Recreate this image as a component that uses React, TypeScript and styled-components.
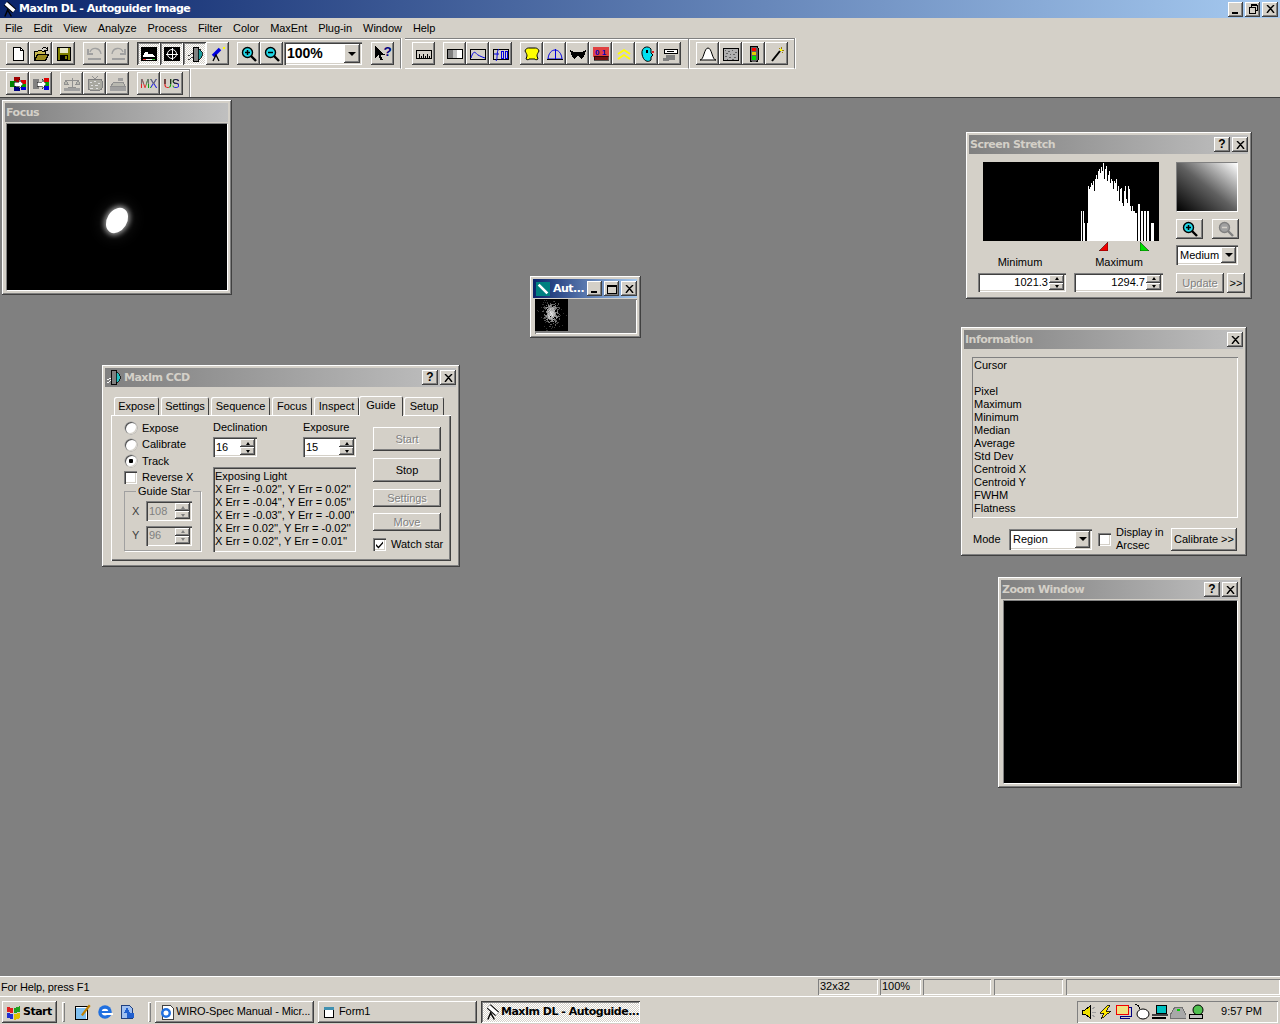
import React from "react"
import styled, { createGlobalStyle, css } from "styled-components"

const GlobalStyle = createGlobalStyle`
    html, body {
        margin: 0;
        padding: 0;
        background: #808080;
    }
    * {
        box-sizing: border-box;
    }
`

const FACE = "#d4d0c8"
const UI_FONT = `"Liberation Sans", Arial, sans-serif`
const TITLE_FONT = `"DejaVu Sans", Verdana, sans-serif`

const raised = css`
    box-shadow: inset -1px -1px #404040, inset 1px 1px #fff, inset -2px -2px #808080, inset 2px 2px ${FACE};
`
const sunken = css`
    box-shadow: inset 1px 1px #808080, inset 2px 2px #404040, inset -1px -1px #fff, inset -2px -2px ${FACE};
`
const etched = css`
    box-shadow: inset 1px 1px #808080, inset -1px -1px #fff;
`
const dither = css`
    background-color: #fff;
    background-image: conic-gradient(${FACE} 25%, #fff 0 50%, ${FACE} 0 75%, #fff 0);
    background-size: 2px 2px;
`

/* ---------- icons ---------- */

const Svg = styled.svg`
    display: block;
    flex: none;
    shape-rendering: crispEdges;
`

const Ico = ({ size = 16, children }: { size?: number; children: React.ReactNode }) => (
    <Svg width={size} height={size} viewBox="0 0 16 16">
        {children}
    </Svg>
)

const Lens = ({ plus, grey }: { plus?: boolean; grey?: boolean }) => (
    <g shapeRendering="auto">
        <path d="M10 10l5 5" stroke={grey ? "#808080" : "#000"} strokeWidth="2.4" />
        <circle cx="6.5" cy="6.5" r="5" fill={grey ? "#a0a0a0" : "#20d8e8"} stroke={grey ? "#808080" : "#000"} strokeWidth="1.4" />
        <path d="M4 6.5h5" stroke={grey ? "#d4d0c8" : "#000"} strokeWidth="1.5" />
        {plus && <path d="M6.5 4v5" stroke={grey ? "#d4d0c8" : "#000"} strokeWidth="1.5" />}
    </g>
)

const toolIcons: Record<string, React.ReactNode> = {
    new: (
        <Ico>
            <path d="M3.5 1.5h7l3 3v10h-10z" fill="#fff" stroke="#000" />
            <path d="M10.5 1.5v3h3" fill="none" stroke="#000" />
        </Ico>
    ),
    open: (
        <Ico>
            <path d="M1.5 5.5h3l1-1h3l1 1h3v9h-11z" fill="#c8b850" stroke="#000" />
            <path d="M1.5 14.5l3-6h11l-3 6z" fill="#9a8a20" stroke="#000" />
            <path d="M9 3c1-2 4-2 5 0M14 1v3h-3" fill="none" stroke="#000" />
        </Ico>
    ),
    save: (
        <Ico>
            <rect x="1.5" y="1.5" width="13" height="13" fill="#808000" stroke="#000" />
            <rect x="4" y="2" width="8" height="5" fill="#e8e8c8" />
            <rect x="4" y="9" width="8" height="5" fill="#000" />
            <rect x="9" y="10" width="2" height="3" fill="#808000" />
        </Ico>
    ),
    undo: (
        <Ico>
            <path d="M3 6c2-5 10-5 11 2" fill="none" stroke="#a0a0a0" strokeWidth="1.3" shapeRendering="auto" />
            <path d="M1 3v5h5" fill="none" stroke="#a0a0a0" strokeWidth="1.3" />
            <path d="M1 13h13" stroke="#a0a0a0" strokeWidth="2" />
        </Ico>
    ),
    redo: (
        <Ico>
            <path d="M13 6C11 1 3 1 2 8" fill="none" stroke="#a0a0a0" strokeWidth="1.3" shapeRendering="auto" />
            <path d="M15 3v5h-5" fill="none" stroke="#a0a0a0" strokeWidth="1.3" />
            <path d="M2 13h13" stroke="#a0a0a0" strokeWidth="2" />
        </Ico>
    ),
    image: (
        <Ico>
            <rect y="1" width="16" height="14" fill="#000" />
            <path d="M2 11c1-6 4-6 5-4s3 0 4 1 3 2 4 3z" fill="#fff" />
            <path d="M2 13h3" stroke="#ff3030" />
            <path d="M11 13h3" stroke="#30d030" />
            <path d="M5 13h6" stroke="#fff" />
        </Ico>
    ),
    target: (
        <Ico>
            <rect y="1" width="16" height="14" fill="#000" />
            <circle cx="8" cy="8" r="4.5" fill="none" stroke="#fff" shapeRendering="auto" />
            <path d="M8 2v12M2 8h12" stroke="#fff" />
        </Ico>
    ),
    ccd: (
        <Ico>
            <path d="M1 10l5-3M1 14l5-3" stroke="#404040" />
            <rect x="6" y="1" width="5" height="14" fill="#808080" stroke="#000" />
            <path d="M11 3h2l2 3v4l-2 3h-2z" fill="#20a0a0" stroke="#000" strokeWidth="0.8" />
        </Ico>
    ),
    scope: (
        <Ico>
            <path d="M3 10l7-7" stroke="#0000e0" strokeWidth="3.6" shapeRendering="auto" />
            <path d="M3 15l3-6 3 6" fill="none" stroke="#000" strokeWidth="1.3" shapeRendering="auto" />
            <rect x="13" y="1" width="2" height="2" fill="#ffff00" />
        </Ico>
    ),
    zoomIn: (
        <Ico>
            <Lens plus />
        </Ico>
    ),
    zoomOut: (
        <Ico>
            <Lens />
        </Ico>
    ),
    help: (
        <Ico size={18}>
            <path d="M1 1v11l3-3 2 5 2-1-2-4h4z" fill="#000" />
            <text x="8.5" y="10" fontFamily={UI_FONT} fontWeight="700" fontSize="12" fill="#000080">
                ?
            </text>
        </Ico>
    ),
    ruler: (
        <Ico>
            <rect x="0.5" y="4.5" width="15" height="8" fill={FACE} stroke="#000" />
            <path d="M3 8v4M5 10v2M7 8v4M9 10v2M11 8v4M13 10v2" stroke="#000" />
        </Ico>
    ),
    stretch: (
        <Ico>
            <rect x="0.5" y="3.5" width="15" height="9" fill="#fff" stroke="#000" />
            <rect x="1" y="4" width="5" height="8" fill="#808080" />
            <rect x="6" y="4" width="4" height="8" fill="#c0c0c0" />
        </Ico>
    ),
    curve: (
        <Ico>
            <rect x="0.5" y="3.5" width="15" height="10" fill="#d4d0c8" stroke="#000" />
            <path d="M1 12c3-10 5-4 7-3s4 2 7 3" fill="none" stroke="#0000e0" shapeRendering="auto" />
        </Ico>
    ),
    fft: (
        <Ico>
            <rect x="0.5" y="3.5" width="15" height="10" fill="#d4d0c8" stroke="#000" />
            <path d="M3 15c2-2 0-10 3-12M1 8h5" fill="none" stroke="#0000e0" shapeRendering="auto" />
            <path d="M8 5h2v7H8zM12 5h2v7h-2z" fill="none" stroke="#0000e0" />
        </Ico>
    ),
    hat: (
        <Ico>
            <path d="M1 5c1-3 3-3 4-3h6c1 0 3 0 4 3-1 2-2 3-2 5l1 3c-1 1-3 1-3 0H5c0 1-2 1-3 0l1-3c0-2-1-3-2-5z" fill="#ffff00" stroke="#000" shapeRendering="auto" />
        </Ico>
    ),
    dome: (
        <Ico>
            <path d="M1 13c1-12 13-12 14 0z" fill="none" stroke="#0000e0" shapeRendering="auto" />
            <path d="M8 3v10" stroke="#0000e0" />
            <path d="M0 13h16" stroke="#000" />
        </Ico>
    ),
    mask: (
        <Ico>
            <path d="M0 4l4 2h8l4-2-2 7-3 2-2-3H7l-2 3-3-2z" fill="#000" />
        </Ico>
    ),
    bits: (
        <Ico>
            <rect y="1" width="16" height="10" fill="#e04040" />
            <rect x="1" y="10" width="14" height="4" fill="#701010" stroke="#000" strokeWidth="0.6" />
            <text x="2" y="9" fontFamily={UI_FONT} fontSize="8" fontWeight="700" fill="#0000c0">
                0 1
            </text>
        </Ico>
    ),
    chevrons: (
        <Ico>
            <path d="M2 8l6-4 6 4M2 13l6-4 6 4" fill="none" stroke="#ffff00" strokeWidth="1.8" shapeRendering="auto" />
        </Ico>
    ),
    face: (
        <Ico>
            <path d="M12 3C9-1 2 1 3 8s6 9 9 6v-3l2-2-2-2z" fill="#00e0f0" stroke="#000" shapeRendering="auto" />
            <rect x="13" y="5" width="2" height="2" fill="#e02020" />
            <rect x="7" y="4" width="2" height="3" fill="#000" />
        </Ico>
    ),
    scale: (
        <Ico>
            <rect x="2" y="3.5" width="13" height="4" fill="#fff" stroke="#000" />
            <rect x="5" y="5" width="7" height="1" fill="#000" />
            <rect x="4" y="9" width="9" height="5" fill="#808080" />
            <rect x="1" y="12" width="6" height="3" fill="#808080" />
        </Ico>
    ),
    gauss: (
        <Ico>
            <path d="M0 14c4 0 4-12 8-12s4 12 8 12z" fill="#fff" stroke="#000" shapeRendering="auto" />
        </Ico>
    ),
    noise: (
        <Ico>
            <rect x="0.5" y="2.5" width="15" height="12" fill="#b0b0b0" stroke="#000" />
            <path d="M2 4h1M5 5h2M9 4h1M12 6h2M3 7h2M7 8h1M10 8h2M2 10h2M6 11h2M11 11h2M4 13h1M9 13h2" stroke="#606060" />
        </Ico>
    ),
    light: (
        <Ico>
            <rect x="4" y="0" width="8" height="16" rx="2" fill="#606060" stroke="#000" />
            <rect x="6" y="2" width="4" height="3" fill="#ff0000" />
            <rect x="6" y="6" width="4" height="3" fill="#e0d000" />
            <rect x="6" y="10" width="4" height="4" fill="#00e000" />
        </Ico>
    ),
    wand: (
        <Ico>
            <path d="M3 15l8-10" stroke="#000" strokeWidth="2" shapeRendering="auto" />
            <path d="M12 1v2M15 4h-2M10 2l1 1M14 7l-1-1" stroke="#a08000" />
            <rect x="11" y="3" width="2" height="2" fill="#ffff00" />
        </Ico>
    ),
    rgbIn: (
        <Ico>
            <rect x="4" y="1" width="6" height="5" fill="#a00000" />
            <rect x="0" y="5" width="6" height="6" fill="#008000" />
            <rect x="4" y="11" width="6" height="4" fill="#000080" />
            <rect x="11" y="4" width="5" height="4" fill="#e00000" />
            <rect x="11" y="8" width="5" height="3" fill="#00a000" />
            <rect x="11" y="11" width="5" height="3" fill="#0000e0" />
            <path d="M4 6h5V3l4 5-4 5v-3H4z" fill="#fff" stroke="#000" strokeWidth="0.5" />
        </Ico>
    ),
    rgbOut: (
        <Ico>
            <rect x="0" y="3" width="6" height="10" fill="#808080" />
            <rect x="11" y="2" width="5" height="4" fill="#e00000" />
            <rect x="11" y="6" width="5" height="4" fill="#00a000" />
            <rect x="11" y="10" width="5" height="4" fill="#0000e0" />
            <path d="M4 6h5V3l4 5-4 5v-3H4z" fill="#fff" stroke="#000" strokeWidth="0.5" />
        </Ico>
    ),
    balance: (
        <Ico>
            <path d="M2 4h12M8 2v10M4 11h8" stroke="#909090" />
            <path d="M0 8l2-4 2 4zM12 8l2-4 2 4z" fill="#b8b8b0" stroke="#909090" />
            <rect y="12" width="16" height="3" fill="#a0a0a0" />
        </Ico>
    ),
    tv: (
        <Ico>
            <rect x="1" y="3" width="14" height="11" rx="2" fill="#a8a8a0" stroke="#808080" />
            <path d="M3 6h2M7 5h2M11 7h2M4 9h2M8 9h3M3 12h3M9 12h2" stroke="#e0e0e0" />
            <path d="M5 0l3 3 3-3" fill="none" stroke="#909090" />
        </Ico>
    ),
    stack: (
        <Ico>
            <rect y="10" width="16" height="5" fill="#a0a0a0" />
            <path d="M1 10l3-4h9l2 4z" fill="#b8b8b0" stroke="#909090" />
            <path d="M8 2h5v3H8z" fill="#a0a0a0" />
        </Ico>
    ),
}

const LetterIcon = styled.span<{ $top: string }>`
    display: block;
    font: 400 12px/16px ${UI_FONT};
    letter-spacing: -0.4px;
    color: transparent;
    background: linear-gradient(to bottom, ${(p) => p.$top} 52%, transparent 52%),
        linear-gradient(to right, #e02020 34%, #10a010 34% 66%, #2020e0 66%);
    -webkit-background-clip: text;
    background-clip: text;
`

const MaximIcon = () => (
    <Svg width={15} height={16} viewBox="0 0 16 16">
        <path d="M4 2l9 8" stroke="#000" strokeWidth="6" shapeRendering="auto" />
        <path d="M4 2l9 8" stroke="#fff" strokeWidth="3.6" shapeRendering="auto" />
        <path d="M3 16l3-7 4 7" fill="none" stroke="#000" strokeWidth="1.5" shapeRendering="auto" />
    </Svg>
)

/* ---------- main frame ---------- */

const Screen = styled.div`
    width: 1280px;
    height: 1024px;
    display: flex;
    flex-direction: column;
    overflow: hidden;
    background: ${FACE};
    color: #000;
    font: 11px/13px ${UI_FONT};
`

const MainTitle = styled.div`
    height: 18px;
    flex: none;
    display: flex;
    align-items: center;
    gap: 2px;
    padding: 0 2px;
    background: linear-gradient(to right, #0a246a, #a6caf0);
`

const MainTitleText = styled.span`
    flex: 1;
    color: #fff;
    font: 700 11px/18px ${TITLE_FONT};
    letter-spacing: -0.5px;
`

const CaptionGroup = styled.div`
    display: flex;
    gap: 2px;
`

const CaptionButton = styled.div<{ $size?: number }>`
    width: ${(p) => p.$size ?? 16}px;
    height: 15px;
    display: flex;
    align-items: center;
    justify-content: center;
    color: #000;
    background: ${FACE};
    ${raised}
    font: 700 12px/15px ${UI_FONT};
    letter-spacing: 0;
`

const MenuBar = styled.div`
    height: 20px;
    flex: none;
    display: flex;
    align-items: center;
    gap: 11px;
    padding-left: 5px;
    letter-spacing: -0.05px;
`

const ToolRow = styled.div<{ $h: number }>`
    height: ${(p) => p.$h}px;
    flex: none;
    display: flex;
    align-items: stretch;
`

const ToolBar = styled.div<{ $pad: number; $w: number; $ml?: number; $last?: boolean }>`
    width: ${(p) => p.$w}px;
    margin-left: ${(p) => p.$ml ?? 0}px;
    display: flex;
    align-items: center;
    padding-left: ${(p) => p.$pad}px;
    border-top: 1px solid #808080;
    border-right: 1px solid #808080;
    border-bottom: ${(p) => (p.$last ? "0" : "1px solid #fff")};
    box-shadow: inset 0 1px #fff, 1px 0 #fff;
`

const ToolGroup = styled.div<{ $gap?: number }>`
    display: flex;
    align-items: center;
    margin-left: ${(p) => p.$gap ?? 0}px;
`

const ToolButton = styled.div<{ $pressed?: boolean }>`
    width: 23px;
    height: 23px;
    display: flex;
    align-items: center;
    justify-content: center;
    ${(p) =>
        p.$pressed
            ? css`
                  ${dither}
                  box-shadow: inset 1px 1px #404040, inset -1px -1px #fff, inset 2px 2px #808080;
              `
            : raised}
`

const ZoomCombo = styled.div`
    width: 78px;
    height: 23px;
    margin-left: 1px;
    display: flex;
    align-items: center;
    padding: 2px;
    background: #fff;
    ${sunken}
`

const ZoomValue = styled.span`
    flex: 1;
    padding-left: 1px;
    font: 700 14px/19px ${UI_FONT};
`

const ArrowCell = styled.div<{ $w?: number; $h?: number; $grey?: boolean }>`
    width: ${(p) => p.$w ?? 16}px;
    height: ${(p) => p.$h ?? 19}px;
    flex: none;
    display: flex;
    align-items: center;
    justify-content: center;
    background: ${FACE};
    ${raised}
    &::after {
        content: "";
        border-left: 4px solid transparent;
        border-right: 4px solid transparent;
        border-top: 4px solid ${(p) => (p.$grey ? "#808080" : "#000")};
    }
`

/* ---------- MDI workspace and floating windows ---------- */

const Workspace = styled.div`
    flex: 1;
    position: relative;
    background: #808080;
    border-top: 1px solid #404040;
`

const Win = styled.div<{ $x: number; $y: number; $w: number; $h: number }>`
    position: absolute;
    left: ${(p) => p.$x}px;
    top: ${(p) => p.$y - 98}px;
    width: ${(p) => p.$w}px;
    height: ${(p) => p.$h}px;
    display: flex;
    flex-direction: column;
    padding: 3px 4px 4px 3px;
    background: ${FACE};
    ${raised}
`

const WinTitle = styled.div<{ $active?: boolean }>`
    height: 19px;
    flex: none;
    display: flex;
    align-items: center;
    gap: 3px;
    padding-left: 1px;
    background: ${(p) =>
        p.$active ? "linear-gradient(to right, #0a246a, #a6caf0)" : "linear-gradient(to right, #808080, #c0c0c0)"};
    color: ${(p) => (p.$active ? "#fff" : FACE)};
    font: 700 11px/19px ${TITLE_FONT};
    letter-spacing: -0.5px;
`

const WinTitleText = styled.span`
    flex: 1;
    white-space: nowrap;
`

const BlackView = styled.div<{ $ml: number }>`
    flex: 1;
    margin: 1px 0 0 ${(p) => p.$ml}px;
    position: relative;
    background: #000;
    border: 1px solid;
    border-color: #808080 #fff #fff #808080;
`

const Star = styled.div`
    position: absolute;
    left: 100px;
    top: 83px;
    width: 20px;
    height: 27px;
    border-radius: 50%;
    background: #fff;
    transform: rotate(32deg);
    box-shadow: 0 0 5px 2px rgba(255, 255, 255, 0.55), 0 0 14px 6px rgba(255, 255, 255, 0.08);
`

const AutIcon = styled(Svg)`
    margin-left: 2px;
`

const ThumbClient = styled.div`
    flex: 1;
    margin: 1px 0 0 2px;
    background: #808080;
    ${etched}
`

/* Guide dialog */

const TabStrip = styled.div`
    height: 21px;
    margin: 7px 0 0 6px;
    padding-left: 3px;
    display: flex;
    align-items: flex-end;
    gap: 2px;
`

const Tab = styled.div<{ $w: number; $active?: boolean }>`
    width: ${(p) => p.$w}px;
    height: ${(p) => (p.$active ? 20 : 18)}px;
    margin: ${(p) => (p.$active ? "0 -1px -1px -2px" : "0")};
    position: relative;
    z-index: ${(p) => (p.$active ? 1 : 0)};
    background: ${FACE};
    text-align: center;
    line-height: 19px;
    border-radius: 2px 2px 0 0;
    box-shadow: inset 1px 1px #fff, inset -1px 0 #404040;
`

const TabPanel = styled.div`
    width: 340px;
    height: 146px;
    margin-left: 6px;
    padding: 5px 0 0 13px;
    display: grid;
    grid-template-columns: 77px 143px 71px;
    column-gap: 12px;
    box-shadow: inset 1px 1px #fff, inset -1px -1px #404040, inset -2px -2px #808080;
`

const Col = styled.div<{ $w?: number; $mt?: number; $ml?: number }>`
    display: flex;
    flex-direction: column;
    width: ${(p) => (p.$w ? `${p.$w}px` : "auto")};
    margin: ${(p) => p.$mt ?? 0}px 0 0 ${(p) => p.$ml ?? 0}px;
`

const OptionRow = styled.div<{ $h?: number; $mt?: number }>`
    height: ${(p) => p.$h ?? 16.5}px;
    margin-top: ${(p) => p.$mt ?? 0}px;
    display: flex;
    align-items: center;
    gap: 5px;
    white-space: nowrap;
`

const RadioDot = styled.div<{ $on?: boolean }>`
    width: 12px;
    height: 12px;
    flex: none;
    margin-left: 1px;
    border-radius: 50%;
    background: ${(p) => (p.$on ? "radial-gradient(circle, #000 0 2px, #fff 2.5px)" : "#fff")};
    box-shadow: inset 1px 1px #505050, inset -1px -1px ${FACE}, 0 0 0 0.5px #a0a0a0;
`

const Check = styled.div`
    width: 13px;
    height: 13px;
    flex: none;
    display: flex;
    align-items: center;
    justify-content: center;
    background: #fff;
    ${sunken}
`

const CheckMark = () => (
    <Svg width={9} height={9} viewBox="0 0 9 9">
        <path d="M1 4l2.500 2.500L8 1.500v2L3.500 8.500 1 6z" fill="#000" shapeRendering="auto" />
    </Svg>
)

const GroupBox = styled.fieldset`
    margin: 1px 0 0;
    padding: 3px 0 0 7px;
    height: 64px;
    border: 1px solid #a0a0a0;
    box-shadow: 1px 1px #fff;
    & > legend {
        margin-left: 4px;
        padding: 0 2px;
        line-height: 9px;
    }
`

const StarRow = styled.div`
    display: flex;
    align-items: center;
    gap: 6px;
    height: 24.5px;
    color: #404040;
`

const StarLabel = styled.span`
    width: 8px;
`

const Spin = styled.div<{ $w: number; $h?: number; $disabled?: boolean }>`
    width: ${(p) => p.$w}px;
    height: ${(p) => p.$h ?? 20}px;
    display: flex;
    align-items: center;
    padding: 2px;
    background: ${(p) => (p.$disabled ? FACE : "#fff")};
    color: ${(p) => (p.$disabled ? "#808080" : "#000")};
    ${sunken}
`

const SpinValue = styled.span<{ $right?: boolean }>`
    flex: 1;
    padding: 0 1px;
    text-align: ${(p) => (p.$right ? "right" : "left")};
`

const SpinArrows = styled.div`
    width: 15px;
    height: 100%;
    display: flex;
    flex-direction: column;
`

const SpinArrow = styled.div<{ $up?: boolean; $disabled?: boolean }>`
    flex: 1;
    display: flex;
    align-items: center;
    justify-content: center;
    background: ${FACE};
    ${raised}
    &::after {
        content: "";
        border-left: 2.5px solid transparent;
        border-right: 2.5px solid transparent;
        ${(p) => (p.$up ? "border-bottom" : "border-top")}: 3px solid ${(p) => (p.$disabled ? "#808080" : "#000")};
    }
`

const Spinner = ({ value, w, right, disabled, h }: { value: string; w: number; right?: boolean; disabled?: boolean; h?: number }) => (
    <Spin $w={w} $h={h} $disabled={disabled}>
        <SpinValue $right={right}>{value}</SpinValue>
        <SpinArrows>
            <SpinArrow $up $disabled={disabled} />
            <SpinArrow $disabled={disabled} />
        </SpinArrows>
    </Spin>
)

const FieldRow = styled.div`
    display: flex;
`

const FieldLabel = styled.div`
    height: 16px;
    line-height: 12px;
    white-space: nowrap;
`

const LogBox = styled.div`
    height: 85px;
    margin-top: 10px;
    padding: 3px 2px;
    line-height: 13px;
    white-space: nowrap;
    box-shadow: inset 1px 1px #808080, inset 2px 2px #404040, inset -1px -1px #fff;
`

const PushButton = styled.div<{ $w?: number; $h: number; $disabled?: boolean; $mt?: number }>`
    width: ${(p) => p.$w ?? 68}px;
    height: ${(p) => p.$h}px;
    margin-top: ${(p) => p.$mt ?? 0}px;
    display: flex;
    flex: none;
    align-items: center;
    justify-content: center;
    background: ${FACE};
    ${raised}
    ${(p) =>
        p.$disabled &&
        css`
            color: #808080;
            text-shadow: 1px 1px #fff;
        `}
`

/* Screen Stretch */

const StretchBody = styled.div`
    flex: 1;
    display: grid;
    grid-template-columns: 186px 70px;
    column-gap: 12px;
    padding: 8px 0 0 9px;
`

const HistogramWrap = styled.div`
    margin-left: 5px;
    width: 176px;
    height: 89px;
    position: relative;
`

const MarkerSvg = styled.svg<{ $left: number }>`
    position: absolute;
    top: 80px;
    left: ${(p) => p.$left}px;
`

const MinMaxLabels = styled.div`
    display: grid;
    grid-template-columns: 84px 114px;
    margin-top: 4px;
    text-align: center;
    line-height: 14px;
`

const MinMaxInputs = styled.div`
    display: flex;
    gap: 8px;
    margin-top: 4px;
`

const GradientBox = styled.div`
    width: 62px;
    height: 50px;
    padding: 1px;
    background: linear-gradient(to top right, #000, #606060 50%, #fff);
    border: 1px solid;
    border-color: #808080 #fff #fff #808080;
`

const IconPair = styled.div`
    display: flex;
    gap: 9px;
    margin-top: 7px;
`

const SmallCombo = styled.div`
    width: 62px;
    height: 20px;
    margin-top: 6px;
    display: flex;
    align-items: center;
    padding: 2px;
    background: #fff;
    ${sunken}
`

const ComboValue = styled.span`
    flex: 1;
    padding-left: 2px;
`

const UpdateRow = styled.div`
    display: flex;
    gap: 3px;
    margin-top: 8px;
`

/* Information */

const InfoList = styled.div`
    height: 163px;
    margin: 8px 5px 0 8px;
    padding: 2px;
    line-height: 13px;
    ${etched}
`

const InfoFooter = styled.div`
    display: flex;
    align-items: center;
    margin: 8px 5px 0 9px;
`

const ModeLabel = styled.span`
    width: 36px;
`

const RegionCombo = styled(SmallCombo)`
    width: 83px;
    height: 21px;
    margin: 0 6px 0 0;
`

const ArcsecLabel = styled.span`
    width: 55px;
    margin-left: 5px;
    line-height: 13px;
`

/* ---------- status bar and task bar ---------- */

const StatusBar = styled.div`
    height: 21px;
    flex: none;
    display: flex;
    align-items: center;
    padding-top: 1px;
    border-top: 1px solid #fff;
    border-bottom: 1px solid #fff;
    box-shadow: 0 -1px #808080;
`

const StatusText = styled.span`
    width: 818px;
    padding-left: 1px;
    letter-spacing: -0.15px;
`

const Pane = styled.div<{ $w: number; $ml?: number }>`
    width: ${(p) => p.$w}px;
    height: 16px;
    margin-left: ${(p) => p.$ml ?? 2}px;
    padding-left: 2px;
    line-height: 15px;
    ${etched}
`

const TaskBar = styled.div`
    height: 27px;
    flex: none;
    display: flex;
    align-items: center;
    padding: 2px 2px 0;
`

const StartButton = styled.div`
    width: 55px;
    height: 22px;
    display: flex;
    align-items: center;
    gap: 1px;
    padding-left: 4px;
    font: 700 11px/22px ${TITLE_FONT};
    letter-spacing: -0.5px;
    ${raised}
`

const TaskSep = styled.div<{ $ml: number; $mr: number }>`
    width: 3px;
    height: 20px;
    margin: 0 ${(p) => p.$mr}px 0 ${(p) => p.$ml}px;
    box-shadow: inset 1px 1px #fff, inset -1px -1px #808080;
`

const QuickLaunch = styled.div`
    display: flex;
    gap: 4px;
`

const TaskButton = styled.div<{ $w: number; $active?: boolean }>`
    width: ${(p) => p.$w}px;
    height: 22px;
    margin-right: 4px;
    display: flex;
    align-items: center;
    gap: 1px;
    padding-left: 4px;
    white-space: nowrap;
    letter-spacing: -0.1px;
    ${(p) =>
        p.$active
            ? css`
                  ${dither}
                  font: 700 11px/22px ${TITLE_FONT};
                  letter-spacing: -0.5px;
                  box-shadow: inset 1px 1px #404040, inset -1px -1px #fff, inset 2px 2px #808080;
              `
            : raised}
`

const Tray = styled.div`
    margin-left: auto;
    width: 201px;
    height: 22px;
    display: flex;
    align-items: center;
    gap: 2px;
    padding-left: 3px;
    box-shadow: inset 1px 1px #808080, inset -1px -1px #fff;
`

const Clock = styled.span`
    margin-left: auto;
    padding-right: 16px;
`

/* ---------- data ---------- */

const menus = ["File", "Edit", "View", "Analyze", "Process", "Filter", "Color", "MaxEnt", "Plug-in", "Window", "Help"]
const tabs = [
    { label: "Expose", w: 45 },
    { label: "Settings", w: 48 },
    { label: "Sequence", w: 59 },
    { label: "Focus", w: 40 },
    { label: "Inspect", w: 45 },
    { label: "Guide", w: 44, active: true },
    { label: "Setup", w: 40 },
]
const infoLines = ["Cursor", "", "Pixel", "Maximum", "Minimum", "Median", "Average", "Std Dev", "Centroid X", "Centroid Y", "FWHM", "Flatness"]
const errLines = [
    "X Err = -0.02'', Y Err = 0.02''",
    "X Err = -0.04'', Y Err = 0.05''",
    "X Err = -0.03'', Y Err = -0.00''",
    "X Err = 0.02'', Y Err = -0.02''",
    "X Err = 0.02'', Y Err = 0.01''",
]
const histogram = [
    30, 0, 30, 18, 0, 0, 18, 55, 52, 54, 58, 56, 60, 50, 62, 66, 62, 70, 72, 68, 74, 70, 78, 62, 72, 75, 60, 66, 70, 58, 62, 60, 52,
    60, 58, 62, 50, 55, 40, 52, 53, 38, 35, 50, 55, 42, 38, 55, 52, 35, 30, 35, 30, 30, 28, 28, 0, 37, 37, 0, 30, 30, 0, 30, 30, 0, 30,
    30, 0, 0, 18, 18, 18,
]

// small fixed-seed generator so the star thumbnail looks like sensor noise
const makeSpeckles = () => {
    let seed = 12345
    const rand = () => {
        seed = (seed * 1103515245 + 12345) % 2147483648
        return seed / 2147483648
    }
    return Array.from({ length: 420 }, () => {
        const r = Math.sqrt(-2 * Math.log(rand() + 0.0001))
        const a = rand() * Math.PI * 2
        return {
            x: Math.round(16 + r * 4 * Math.cos(a)),
            y: Math.round(14 + r * 6 * Math.sin(a)),
            v: Math.round(Math.max(50, 255 - r * 70 - rand() * 60)),
        }
    })
}
const speckles = makeSpeckles()

const Tools = ({ names, pressed = [] }: { names: string[]; pressed?: string[] }) => (
    <>
        {names.map((n) => (
            <ToolButton key={n} $pressed={pressed.includes(n)}>
                {toolIcons[n]}
            </ToolButton>
        ))}
    </>
)

const Caption = ({ kind, size }: { kind: "?" | "x"; size?: number }) => (
    <CaptionButton $size={size}>
        {kind === "?" ? (
            "?"
        ) : (
            <Svg width={9} height={8} viewBox="0 0 9 8">
                <path d="M1 0l3.500 3.500L8 0M1 8l3.500-4.500L8 8" fill="none" stroke="#000" strokeWidth="1.4" shapeRendering="auto" />
            </Svg>
        )}
    </CaptionButton>
)

const MinIcon = () => (
    <Svg width={9} height={9} viewBox="0 0 9 9">
        <rect x="1" y="7" width="6" height="2" fill="#000" />
    </Svg>
)

const RestoreIcon = () => (
    <Svg width={10} height={10} viewBox="0 0 10 10">
        <path d="M3 3V1h6v5H7M1 3.500h6v5.500H1z" fill="none" stroke="#000" />
        <path d="M3 1h6M1 3.500h6" stroke="#000" strokeWidth="1.500" />
    </Svg>
)

const MaxIcon = () => (
    <Svg width={10} height={10} viewBox="0 0 10 10">
        <rect x="0.500" y="1" width="9" height="8" fill="none" stroke="#000" />
        <rect x="0" y="0.500" width="10" height="2" fill="#000" />
    </Svg>
)

export default function App() {
    return (
        <>
            <GlobalStyle />
            <Screen>
                <MainTitle>
                    <MaximIcon />
                    <MainTitleText>MaxIm DL - Autoguider Image</MainTitleText>
                    <CaptionGroup>
                        <CaptionButton $size={15}>
                            <MinIcon />
                        </CaptionButton>
                        <CaptionButton $size={15}>
                            <RestoreIcon />
                        </CaptionButton>
                        <Caption kind="x" />
                    </CaptionGroup>
                </MainTitle>
                <MenuBar>
                    {menus.map((m) => (
                        <span key={m}>{m}</span>
                    ))}
                </MenuBar>

                <ToolRow $h={31}>
                    <ToolBar $pad={6} $w={401}>
                        <Tools names={["new", "open", "save"]} />
                        <ToolGroup $gap={8}>
                            <Tools names={["undo", "redo"]} />
                        </ToolGroup>
                        <ToolGroup $gap={8}>
                            <Tools names={["image", "target", "ccd", "scope"]} pressed={["image", "target", "ccd"]} />
                        </ToolGroup>
                        <ToolGroup $gap={8}>
                            <Tools names={["zoomIn", "zoomOut"]} />
                            <ZoomCombo>
                                <ZoomValue>100%</ZoomValue>
                                <ArrowCell />
                            </ZoomCombo>
                        </ToolGroup>
                        <ToolGroup $gap={9}>
                            <Tools names={["help"]} />
                        </ToolGroup>
                    </ToolBar>
                    <ToolBar $pad={7} $w={284} $ml={4}>
                        <Tools names={["ruler"]} />
                        <ToolGroup $gap={8}>
                            <Tools names={["stretch", "curve", "fft"]} />
                        </ToolGroup>
                        <ToolGroup $gap={8}>
                            <Tools names={["hat", "dome", "mask", "bits", "chevrons", "face", "scale"]} />
                        </ToolGroup>
                    </ToolBar>
                    <ToolBar $pad={7} $w={106}>
                        <Tools names={["gauss", "noise", "light", "wand"]} />
                    </ToolBar>
                </ToolRow>
                <ToolRow $h={28}>
                    <ToolBar $pad={6} $w={190} $last>
                        <Tools names={["rgbIn", "rgbOut"]} />
                        <ToolGroup $gap={8}>
                            <Tools names={["balance", "tv", "stack"]} />
                        </ToolGroup>
                        <ToolGroup $gap={8}>
                            <ToolButton>
                                <LetterIcon $top="#707070">MX</LetterIcon>
                            </ToolButton>
                            <ToolButton>
                                <LetterIcon $top="#202020">US</LetterIcon>
                            </ToolButton>
                        </ToolGroup>
                    </ToolBar>
                </ToolRow>

                <Workspace>
                    <Win $x={2} $y={100} $w={230} $h={195}>
                        <WinTitle>
                            <WinTitleText>Focus</WinTitleText>
                        </WinTitle>
                        <BlackView $ml={1}>
                            <Star />
                        </BlackView>
                    </Win>

                    <Win $x={530} $y={276} $w={111} $h={62}>
                        <WinTitle $active>
                            <AutIcon width={14} height={16} viewBox="0 0 16 16">
                                <rect width="16" height="16" fill="#008080" />
                                <path d="M3 3l10 10" stroke="#fff" strokeWidth="3" shapeRendering="auto" />
                            </AutIcon>
                            <WinTitleText>Aut...</WinTitleText>
                            <CaptionGroup>
                                <CaptionButton $size={15}>
                                    <MinIcon />
                                </CaptionButton>
                                <CaptionButton $size={15}>
                                    <MaxIcon />
                                </CaptionButton>
                                <Caption kind="x" />
                            </CaptionGroup>
                        </WinTitle>
                        <ThumbClient>
                            <Svg width={33} height={32} viewBox="0 0 33 32">
                                <rect width="33" height="32" fill="#000" />
                                {speckles.map((s, i) => (
                                    <rect key={i} x={s.x} y={s.y} width="1" height="1" fill={`rgb(${s.v},${s.v},${s.v})`} />
                                ))}
                            </Svg>
                        </ThumbClient>
                    </Win>

                    <Win $x={102} $y={365} $w={358} $h={202}>
                        <WinTitle>
                            <Svg width={15} height={15} viewBox="0 0 16 16">
                                <path d="M1 11l5-3M1 14l5-3" stroke="#fff" />
                                <rect x="6" y="1" width="5" height="14" fill="#808080" stroke="#000" />
                                <path d="M11 3h2l2 3v4l-2 3h-2z" fill="#20c0c0" stroke="#000" strokeWidth="0.8" />
                            </Svg>
                            <WinTitleText>MaxIm CCD</WinTitleText>
                            <CaptionGroup>
                                <Caption kind="?" />
                                <Caption kind="x" />
                            </CaptionGroup>
                        </WinTitle>
                        <TabStrip>
                            {tabs.map((t) => (
                                <Tab key={t.label} $w={t.w} $active={t.active}>
                                    {t.label}
                                </Tab>
                            ))}
                        </TabStrip>
                        <TabPanel>
                            <Col>
                                <OptionRow>
                                    <RadioDot />
                                    Expose
                                </OptionRow>
                                <OptionRow>
                                    <RadioDot />
                                    Calibrate
                                </OptionRow>
                                <OptionRow>
                                    <RadioDot $on />
                                    Track
                                </OptionRow>
                                <OptionRow>
                                    <Check />
                                    Reverse X
                                </OptionRow>
                                <GroupBox>
                                    <legend>Guide Star</legend>
                                    <StarRow>
                                        <StarLabel>X</StarLabel>
                                        <Spinner value="108" w={46} disabled h={20} />
                                    </StarRow>
                                    <StarRow>
                                        <StarLabel>Y</StarLabel>
                                        <Spinner value="96" w={46} disabled h={20} />
                                    </StarRow>
                                </GroupBox>
                            </Col>
                            <Col $mt={1}>
                                <FieldRow>
                                    <Col $w={90}>
                                        <FieldLabel>Declination</FieldLabel>
                                        <Spinner value="16" w={44} />
                                    </Col>
                                    <Col $w={53}>
                                        <FieldLabel>Exposure</FieldLabel>
                                        <Spinner value="15" w={53} />
                                    </Col>
                                </FieldRow>
                                <LogBox>
                                    Exposing Light
                                    {errLines.map((l, i) => (
                                        <div key={i}>{l}</div>
                                    ))}
                                </LogBox>
                            </Col>
                            <Col $mt={7} $ml={5}>
                                <PushButton $h={24} $disabled>
                                    Start
                                </PushButton>
                                <PushButton $h={24} $mt={7}>
                                    Stop
                                </PushButton>
                                <PushButton $h={18} $mt={7} $disabled>
                                    Settings
                                </PushButton>
                                <PushButton $h={18} $mt={6} $disabled>
                                    Move
                                </PushButton>
                                <OptionRow $h={13} $mt={7}>
                                    <Check>
                                        <CheckMark />
                                    </Check>
                                    Watch star
                                </OptionRow>
                            </Col>
                        </TabPanel>
                    </Win>

                    <Win $x={966} $y={132} $w={286} $h={167}>
                        <WinTitle>
                            <WinTitleText>Screen Stretch</WinTitleText>
                            <CaptionGroup>
                                <Caption kind="?" />
                                <Caption kind="x" />
                            </CaptionGroup>
                        </WinTitle>
                        <StretchBody>
                            <Col>
                                <HistogramWrap>
                                    <Svg width={176} height={79} viewBox="0 0 176 79">
                                        <rect width="176" height="79" fill="#000" />
                                        {histogram.map((h, i) => (
                                            <rect key={i} x={98 + i} y={79 - h} width="1" height={h} fill="#fff" />
                                        ))}
                                    </Svg>
                                    <MarkerSvg $left={116} width={9} height={9} viewBox="0 0 9 9">
                                        <path d="M9 0v9H0z" fill="#f00000" stroke="#000" strokeWidth="0.5" />
                                    </MarkerSvg>
                                    <MarkerSvg $left={157} width={9} height={9} viewBox="0 0 9 9">
                                        <path d="M0 0v9h9z" fill="#00e000" stroke="#000" strokeWidth="0.5" />
                                    </MarkerSvg>
                                </HistogramWrap>
                                <MinMaxLabels>
                                    <span>Minimum</span>
                                    <span>Maximum</span>
                                </MinMaxLabels>
                                <MinMaxInputs>
                                    <Spinner value="1021.3" w={88} right h={19} />
                                    <Spinner value="1294.7" w={89} right h={19} />
                                </MinMaxInputs>
                            </Col>
                            <Col>
                                <GradientBox />
                                <IconPair>
                                    <PushButton $w={27} $h={20}>
                                        <Ico>
                                            <Lens plus />
                                        </Ico>
                                    </PushButton>
                                    <PushButton $w={27} $h={20}>
                                        <Ico>
                                            <Lens grey />
                                        </Ico>
                                    </PushButton>
                                </IconPair>
                                <SmallCombo>
                                    <ComboValue>Medium</ComboValue>
                                    <ArrowCell $h={16} $w={15} />
                                </SmallCombo>
                                <UpdateRow>
                                    <PushButton $w={48} $h={20} $disabled>
                                        Update
                                    </PushButton>
                                    <PushButton $w={18} $h={20}>
                                        &gt;&gt;
                                    </PushButton>
                                </UpdateRow>
                            </Col>
                        </StretchBody>
                    </Win>

                    <Win $x={961} $y={327} $w={286} $h={229}>
                        <WinTitle>
                            <WinTitleText>Information</WinTitleText>
                            <Caption kind="x" />
                        </WinTitle>
                        <InfoList>
                            {infoLines.map((l, i) => (
                                <div key={i}>{l || "\u00a0"}</div>
                            ))}
                        </InfoList>
                        <InfoFooter>
                            <ModeLabel>Mode</ModeLabel>
                            <RegionCombo>
                                <ComboValue>Region</ComboValue>
                                <ArrowCell $h={17} $w={15} />
                            </RegionCombo>
                            <Check />
                            <ArcsecLabel>
                                Display in
                                <br />
                                Arcsec
                            </ArcsecLabel>
                            <PushButton $w={66} $h={23}>
                                Calibrate &gt;&gt;
                            </PushButton>
                        </InfoFooter>
                    </Win>

                    <Win $x={998} $y={577} $w={244} $h={211}>
                        <WinTitle>
                            <WinTitleText>Zoom Window</WinTitleText>
                            <CaptionGroup>
                                <Caption kind="?" />
                                <Caption kind="x" />
                            </CaptionGroup>
                        </WinTitle>
                        <BlackView $ml={2} />
                    </Win>
                </Workspace>

                <StatusBar>
                    <StatusText>For Help, press F1</StatusText>
                    <Pane $w={60} $ml={0}>
                        32x32
                    </Pane>
                    <Pane $w={41}>100%</Pane>
                    <Pane $w={68} />
                    <Pane $w={69} $ml={3} />
                    <Pane $w={214} $ml={3} />
                </StatusBar>

                <TaskBar>
                    <StartButton>
                        <Ico>
                            <path d="M1 3l6 1v5L1 8z" fill="#e02020" />
                            <path d="M8 4l6-2v6L8 9z" fill="#20a020" />
                            <path d="M1 9l6 1v5l-6-1z" fill="#2030d0" />
                            <path d="M8 10l6-1v5l-6 2z" fill="#e0c000" />
                        </Ico>
                        Start
                    </StartButton>
                    <TaskSep $ml={5} $mr={9} />
                    <QuickLaunch>
                        <Ico size={18}>
                            <rect x="1" y="3" width="11" height="12" fill="#fff" stroke="#000" />
                            <rect x="2" y="4" width="9" height="10" fill="#80c0f0" />
                            <path d="M7 11L14 2" stroke="#c08000" strokeWidth="2" shapeRendering="auto" />
                        </Ico>
                        <Ico size={18}>
                            <circle cx="8" cy="8" r="6" fill="#2070e0" shapeRendering="auto" />
                            <circle cx="8" cy="8" r="3" fill="#fff" shapeRendering="auto" />
                            <rect x="4" y="7" width="8" height="2" fill="#2070e0" />
                            <rect x="10" y="9" width="5" height="2" fill="#fff" />
                        </Ico>
                        <Ico size={18}>
                            <path d="M3 2h7l3 3v9H3z" fill="#a0c0f0" stroke="#204080" />
                            <path d="M5 9l3-5 3 5zM8 9h6v4H8z" fill="#2060d0" />
                        </Ico>
                    </QuickLaunch>
                    <TaskSep $ml={12} $mr={4} />
                    <TaskButton $w={159}>
                        <Ico>
                            <path d="M3 1h8l3 3v11H3z" fill="#fff" stroke="#404040" />
                            <circle cx="7" cy="9" r="5" fill="#2070e0" shapeRendering="auto" />
                            <circle cx="7" cy="9" r="2.500" fill="#fff" shapeRendering="auto" />
                        </Ico>
                        WIRO-Spec Manual - Micr...
                    </TaskButton>
                    <TaskButton $w={159}>
                        <Ico>
                            <rect x="2.500" y="4.500" width="9" height="9" fill="#fff" stroke="#000" />
                            <rect x="2" y="3" width="10" height="3" fill="#4090b0" />
                        </Ico>
                        Form1
                    </TaskButton>
                    <TaskButton $w={159} $active>
                        <MaximIcon />
                        MaxIm DL - Autoguide...
                    </TaskButton>
                    <Tray>
                        <Ico>
                            <path d="M2 6h3l5-4v12l-5-4H2z" fill="#f0e000" stroke="#000" />
                            <path d="M12 5l3-2M12 8h4M12 11l3 2" stroke="#a0a0a0" />
                        </Ico>
                        <Ico>
                            <path d="M10 1L2 9h4l-3 6 10-8H8l4-6z" fill="#ffe800" stroke="#000" strokeWidth="0.8" />
                        </Ico>
                        <Ico>
                            <rect x="0.500" y="1.500" width="12" height="9" fill="#f0e080" stroke="#f00000" />
                            <path d="M13 3h2v9H4v2h10" fill="none" stroke="#000080" />
                        </Ico>
                        <Ico>
                            <ellipse cx="9" cy="10" rx="6" ry="5" fill="#fff" stroke="#000" shapeRendering="auto" />
                            <path d="M1 1c2-1 4 1 5 4" fill="none" stroke="#000" />
                        </Ico>
                        <Ico>
                            <rect x="4.500" y="1.500" width="10" height="8" fill="#00c0c0" stroke="#000" />
                            <rect x="0" y="10" width="16" height="2" fill="#404040" />
                            <rect x="0" y="13" width="14" height="2" fill="#000" />
                        </Ico>
                        <Ico>
                            <path d="M5 3h7l4 8v3H0v-3z" fill="#a8a8a8" stroke="#707070" />
                            <rect x="7" y="5" width="3" height="2" fill="#00d000" />
                        </Ico>
                        <Ico>
                            <circle cx="10" cy="6" r="5" fill="#50c050" stroke="#000" shapeRendering="auto" />
                            <rect x="1.500" y="10.500" width="13" height="4" fill="#c0c0c0" stroke="#000" />
                        </Ico>
                        <Clock>9:57 PM</Clock>
                    </Tray>
                </TaskBar>
            </Screen>
        </>
    )
}
